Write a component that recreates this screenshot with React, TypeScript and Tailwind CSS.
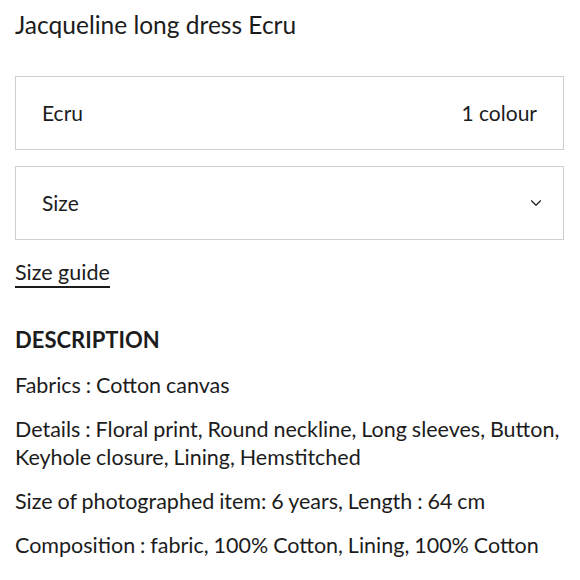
import { ChevronDown } from 'lucide-react';

const lines = [
  'Fabrics : Cotton canvas',
  'Details : Floral print, Round neckline, Long sleeves, Button, Keyhole closure, Lining, Hemstitched',
  'Size of photographed item: 6 years, Length : 64 cm',
  'Composition : fabric, 100% Cotton, Lining, 100% Cotton',
];

export default function App() {
  return (
    <div className="min-h-[580px] bg-white pl-[15px] pr-[16px] pt-[10px] text-[#1c1c1c] font-['Lato',sans-serif]">
      <h1 className="text-[24.5px] leading-[30px]">Jacqueline long dress Ecru</h1>

      <div className="mt-[36px] flex h-[74px] items-center justify-between border border-[#cfcfcf] pl-[26px] pr-[26px] text-[21px]">
        <span>Ecru</span>
        <span>1 colour</span>
      </div>

      <div className="mt-[16px] flex h-[74px] items-center justify-between border border-[#cfcfcf] pl-[26px] pr-[18px] text-[21px]">
        <span>Size</span>
        <ChevronDown size={18} strokeWidth={1.5} />
      </div>

      <div className="mt-[19px]">
        <a className="inline-block border-b-2 border-[#1c1c1c] pb-[1px] text-[21.5px] leading-[26px]">Size guide</a>
      </div>

      <h2 className="mt-[38px] text-[22px] font-bold leading-[28px]">DESCRIPTION</h2>

      <div className="-mr-[2px] mt-[17px] flex flex-col gap-[16px] text-[21.5px] leading-[28px] [word-spacing:-0.6px]">
        {lines.map((l) => (
          <p key={l}>{l}</p>
        ))}
      </div>
    </div>
  );
}
